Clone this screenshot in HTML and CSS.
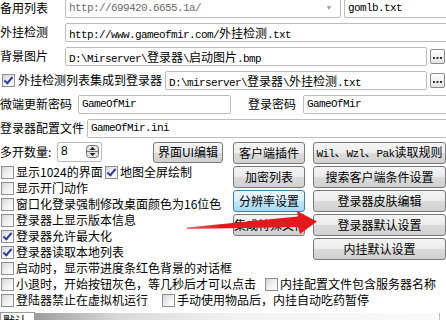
FILE: index.html
```html
<!doctype html>
<html lang="zh">
    <head>
        <meta charset="UTF-8" />
        <meta name="viewport" content="width=device-width, initial-scale=1.0" />
        <title>登录器配置</title>
        <link rel="stylesheet" href="styles.css">
    </head>
    <body>
        <div class="panel">
            <div class="row">
                <span class="lbl w65">备用列表</span>
                <div class="field combo">http://699420.6655.1a/<span class="drop">&#9660;</span></div>
                <div class="field list-file">gomlb.txt</div>
            </div>
            <div class="row">
                <span class="lbl w65">外挂检测</span>
                <div class="field grow off">http://www.gameofmir.com/<span class="cn">外挂检测</span>.txt</div>
            </div>
            <div class="row">
                <span class="lbl w65">背景图片</span>
                <div class="field grow">D:\Mirserver\<span class="cn">登录器</span>\<span class="cn">启动图片</span>.bmp</div>
                <button class="dots"><svg width="9" height="3"><rect x="0" y="0" width="2" height="2"/><rect x="3.5" y="0" width="2" height="2"/><rect x="7" y="0" width="2" height="2"/></svg></button>
            </div>
            <div class="row">
                <span class="cb on first"></span>
                <span class="lbl gap3">外挂检测列表集成到登录器</span>
                <div class="field grow">D:\mirserver\<span class="cn">登录器</span>\<span class="cn">外挂检测</span>.txt</div>
                <button class="dots"><svg width="9" height="3"><rect x="0" y="0" width="2" height="2"/><rect x="3.5" y="0" width="2" height="2"/><rect x="7" y="0" width="2" height="2"/></svg></button>
            </div>
            <div class="row">
                <span class="lbl">微端更新密码</span>
                <div class="field pass1">GameOfMir</div>
                <span class="lbl pass-lbl">登录密码</span>
                <div class="field grow off">GameOfMir</div>
            </div>
            <div class="row">
                <span class="lbl">登录器配置文件</span>
                <div class="field grow off cfg">GameOfMir.ini</div>
            </div>

            <div class="mid">
                <div class="left">
                    <div class="row">
                        <span class="lbl count-lbl">多开数量:</span>
                        <div class="field spin"><span class="num">8</span>
                            <svg class="spin-icon" width="13" height="13" viewBox="0 0 13 13">
                                <rect x="0.5" y="0.5" width="12" height="12" rx="3" fill="#e4e4e4" stroke="#6f6f6f"/>
                                <line x1="1" y1="6.5" x2="12" y2="6.5" stroke="#6f6f6f"/>
                                <polygon points="6.5,2 9.5,5 3.5,5" fill="#222"/>
                                <polygon points="3.5,8 9.5,8 6.5,11" fill="#222"/>
                            </svg>
                        </div>
                        <button class="btn ui-btn">界面UI编辑</button>
                    </div>
                    <div class="cbrow">
                        <span class="item w-map"><span class="cb"></span>显示1024的界面</span>
                        <span class="item"><span class="cb on"></span>地图全屏绘制</span>
                    </div>
                    <div class="cbrow"><span class="item"><span class="cb"></span>显示开门动作</span></div>
                    <div class="cbrow"><span class="item"><span class="cb"></span>窗口化登录强制修改桌面颜色为16位色</span></div>
                    <div class="cbrow"><span class="item"><span class="cb"></span>登录器上显示版本信息</span></div>
                    <div class="cbrow"><span class="item"><span class="cb on"></span>登录器允许最大化</span></div>
                    <div class="cbrow"><span class="item"><span class="cb on"></span>登录器读取本地列表</span></div>
                </div>
                <div class="btns">
                    <div class="bcol narrow">
                        <button class="btn">客户端插件</button>
                        <button class="btn">加密列表</button>
                        <button class="btn hot">分辨率设置</button>
                        <button class="btn">集成特殊文件</button>
                    </div>
                    <div class="bcol wide">
                        <button class="btn mono-btn">Wil<span class="cn">、</span>Wzl<span class="cn">、</span>Pak<span class="cn">读取规则</span></button>
                        <button class="btn">搜索客户端条件设置</button>
                        <button class="btn">登录器皮肤编辑</button>
                        <button class="btn">登录器默认设置</button>
                        <button class="btn">内挂默认设置</button>
                    </div>
                </div>
            </div>

            <div class="cbrow"><span class="item"><span class="cb"></span>启动时，显示带进度条红色背景的对话框</span></div>
            <div class="cbrow">
                <span class="item w-quit"><span class="cb"></span>小退时，开始按钮灰色，等几秒后才可以点击</span>
                <span class="item"><span class="cb"></span>内挂配置文件包含服务器名称</span>
            </div>
            <div class="cbrow">
                <span class="item w-vm"><span class="cb"></span>登陆器禁止在虚拟机运行</span>
                <span class="item"><span class="cb"></span>手动使用物品后，内挂自动吃药暂停</span>
            </div>

            <div class="strip">
                <div class="tab">默认设置</div>
                <div class="bar"></div>
            </div>
        </div>

        <svg class="arrow" width="446" height="320" viewBox="0 0 446 320">
            <defs>
                <linearGradient id="arrowFill" x1="0" x2="1" y1="0" y2="0">
                    <stop offset="0" stop-color="#f36a6a"/>
                    <stop offset="0.25" stop-color="#e4191d"/>
                    <stop offset="1" stop-color="#e4191d"/>
                </linearGradient>
            </defs>
            <polygon points="187,227.5 298,216.5 297,211 317,221.5 300,234 298,227 187,229" fill="url(#arrowFill)"/>
        </svg>
    </body>
</html>
```

FILE: styles.css
```css
body {
    margin: 0;
    width: 446px;
    height: 320px;
    overflow: hidden;
    position: relative;
    background: #fff;
    color: #000;
    font-family: "Noto Sans CJK SC", sans-serif;
    font-size: 12px;
}
.panel {
    margin-top: -4px;
}
.row {
    display: flex;
    align-items: center;
    height: 24px;
    white-space: nowrap;
}
.lbl {
    flex: none;
    line-height: 16px;
}
.w65 {
    width: 65px;
}
.gap3 {
    margin-left: 3px;
    margin-right: 3px;
}
.field {
    box-sizing: border-box;
    flex: none;
    height: 19px;
    border: 1px solid #bcbcbc;
    border-radius: 2px;
    background: #fff;
    padding-left: 3px;
    font-family: "Liberation Mono", monospace;
    font-size: 11px;
    letter-spacing: -0.6px;
    line-height: 17px;
    white-space: nowrap;
    overflow: hidden;
    position: relative;
}
.cn {
    font-family: "Noto Sans CJK SC", sans-serif;
    font-size: 12px;
    letter-spacing: 0;
}
.grow {
    flex: 1;
}
.off {
    margin-right: -8px;
}
.combo {
    width: 276px;
    color: #6d6d6d;
}
.drop {
    position: absolute;
    right: 9px;
    top: 0;
    font-size: 7px;
    color: #9a9a9a;
    letter-spacing: 0;
}
.list-file {
    width: 112px;
    margin-left: 3px;
    margin-right: -8px;
}
.dots {
    flex: none;
    width: 15px;
    height: 15px;
    margin: 0 1px 0 3px;
    padding: 0;
    border: 1px solid #8a8a8a;
    border-radius: 2px;
    background: linear-gradient(#ffffff, #e3e3e3);
    display: flex;
    align-items: center;
    justify-content: center;
}
.dots svg {
    fill: #333;
    margin-top: 4px;
}
.pass1 {
    width: 153px;
    margin-left: 6px;
}
.pass-lbl {
    margin-left: 17px;
    margin-right: 7px;
}
.cfg {
    margin-left: 3px;
}

.mid {
    display: flex;
    gap: 10px;
}
.left {
    width: 223px;
    flex: none;
}
.count-lbl {
    width: 54px;
    margin-right: 3px;
}
.spin {
    width: 45px;
    height: 20px;
    font-family: "Liberation Sans", sans-serif;
    font-size: 12px;
    letter-spacing: 0;
}
.spin-icon {
    position: absolute;
    right: 2px;
    top: 2px;
}
.btn {
    box-sizing: border-box;
    height: 22px;
    padding: 0;
    border: 1px solid #7a7a7a;
    border-radius: 3px;
    background: linear-gradient(#f4f4f4, #ececec 50%, #dcdcdc 51%, #d0d0d0);
    color: #000;
    font-family: "Noto Sans CJK SC", sans-serif;
    font-size: 12px;
    line-height: 18px;
    white-space: nowrap;
}
.ui-btn {
    width: 70px;
    height: 21px;
    margin-left: auto;
}
.btn.hot {
    border-color: #3c7fb1;
    background: linear-gradient(#eaf6fd, #d9f0fc 50%, #bee6fd 51%, #a7d9f5);
}
.mono-btn {
    font-family: "Liberation Mono", monospace;
    font-size: 11px;
    letter-spacing: -0.6px;
}
.btns {
    display: flex;
    gap: 8px;
    padding-top: 2px;
}
.bcol {
    display: flex;
    flex-direction: column;
    gap: 2px;
}
.narrow {
    width: 72px;
}
.wide {
    width: 133px;
}

.cbrow {
    display: flex;
    align-items: center;
    height: 16px;
    white-space: nowrap;
}
.item {
    display: flex;
    align-items: center;
    gap: 2px;
    line-height: 16px;
}
.w-map {
    width: 104px;
}
.w-quit {
    width: 264px;
}
.w-vm {
    width: 161px;
}
.cb {
    box-sizing: border-box;
    flex: none;
    width: 13px;
    height: 13px;
    margin-left: 1px;
    border: 1px solid #8f8f8f;
    background: linear-gradient(135deg, #d6d6d6, #f8f8f8 70%, #ffffff);
    position: relative;
}
.cb.first {
    margin-left: 2px;
}
.cb.on::after {
    content: "";
    position: absolute;
    left: 3px;
    top: 0;
    width: 3px;
    height: 7px;
    border: solid #2f3f9a;
    border-width: 0 2px 2px 0;
    transform: rotate(40deg);
}

.strip {
    display: flex;
    margin-top: 4px;
    height: 20px;
}
.tab {
    box-sizing: border-box;
    width: 35px;
    border: 1px solid #9a9a9a;
    border-bottom: none;
    padding-left: 2px;
    line-height: 16px;
    overflow: hidden;
}
.bar {
    flex: 1;
    margin-right: 6px;
    margin-top: 1px;
    border-right: 1px solid #bdbdbd;
    background: linear-gradient(to right, #9d9d9d, #d8d8d8 20%, #f3f3f3 50%, #fafafa);
}

.arrow {
    position: absolute;
    left: 0;
    top: 0;
    pointer-events: none;
}
```
